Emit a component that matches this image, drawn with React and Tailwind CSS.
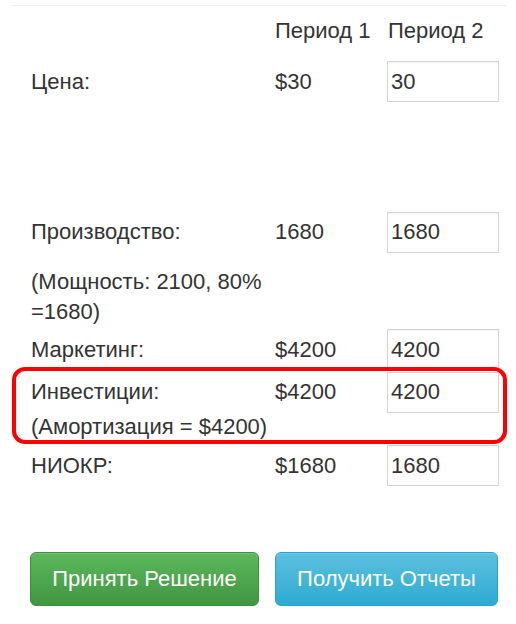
import React from 'react'

const Cell = ({ children, className = '' }) => (
  <div className={`flex items-center ${className}`}>{children}</div>
)

const Field = ({ value }) => (
  <input
    defaultValue={value}
    className="w-[112px] h-[41px] border border-[#d4d4d4] bg-white px-[3px] text-[22px] text-[#333] outline-none shadow-[inset_0_1px_1px_rgba(0,0,0,0.05)]"
  />
)

function Row({ label, prev, value, className = '' }) {
  return (
    <div className={`flex items-center pl-[31px] ${className}`}>
      <Cell className="w-[244px]">{label}</Cell>
      <Cell className="w-[112px]">{prev}</Cell>
      {value !== undefined && <Field value={value} />}
    </div>
  )
}

export default function App() {
  return (
    <div className="w-[516px] h-[624px] bg-white text-[22px] leading-[30px] text-[#333] font-['Liberation_Sans',Arial,sans-serif]">
      {/* верхняя линия */}
      <div className="pt-[5px] pl-[12px] pr-[10px]">
        <div className="border-t border-[#eee]" />
      </div>

      {/* заголовок */}
      <div className="flex pl-[275px] mt-[10px] h-[30px]">
        <div className="w-[113px]">Период 1</div>
        <div>Период 2</div>
      </div>

      <Row label="Цена:" prev="$30" value="30" className="mt-[15px] h-[41px]" />

      <Row label="Производство:" prev="1680" value="1680" className="mt-[109px] h-[42px]" />

      <div className="pl-[31px] mt-[14px] h-[60px]">
        (Мощность: 2100, 80%
        <br />
        =1680)
      </div>

      <Row label="Маркетинг:" prev="$4200" value="4200" className="mt-[2px] h-[41px]" />

      <div className="relative mt-[2px]">
        <Row label="Инвестиции:" prev="$4200" value="4200" className="h-[40px]" />
        <div className="pl-[31px] h-[31px] leading-[30px]">(Амортизация = $4200)</div>
        {/* красная рамка поверх */}
        <div className="absolute left-[12px] right-[9px] -top-[5px] -bottom-[1px] border-[4px] border-[#ff0000] rounded-[13px] pointer-events-none" />
      </div>

      <Row label="НИОКР:" prev="$1680" value="1680" className="mt-[2px] h-[41px]" />

      {/* кнопки */}
      <div className="flex mt-[66px] pl-[30px] gap-[16px]">
        <button className="w-[229px] h-[54px] rounded-[6px] border border-[#3e8f3e] bg-gradient-to-b from-[#5cb85c] to-[#419641] text-white text-[22px] shadow-[inset_0_1px_0_rgba(255,255,255,0.15)]">
          Принять Решение
        </button>
        <button className="w-[223px] h-[54px] rounded-[6px] border border-[#28a4c9] bg-gradient-to-b from-[#5bc0de] to-[#2aabd2] text-white text-[22px] shadow-[inset_0_1px_0_rgba(255,255,255,0.15)]">
          Получить Отчеты
        </button>
      </div>
    </div>
  )
}
